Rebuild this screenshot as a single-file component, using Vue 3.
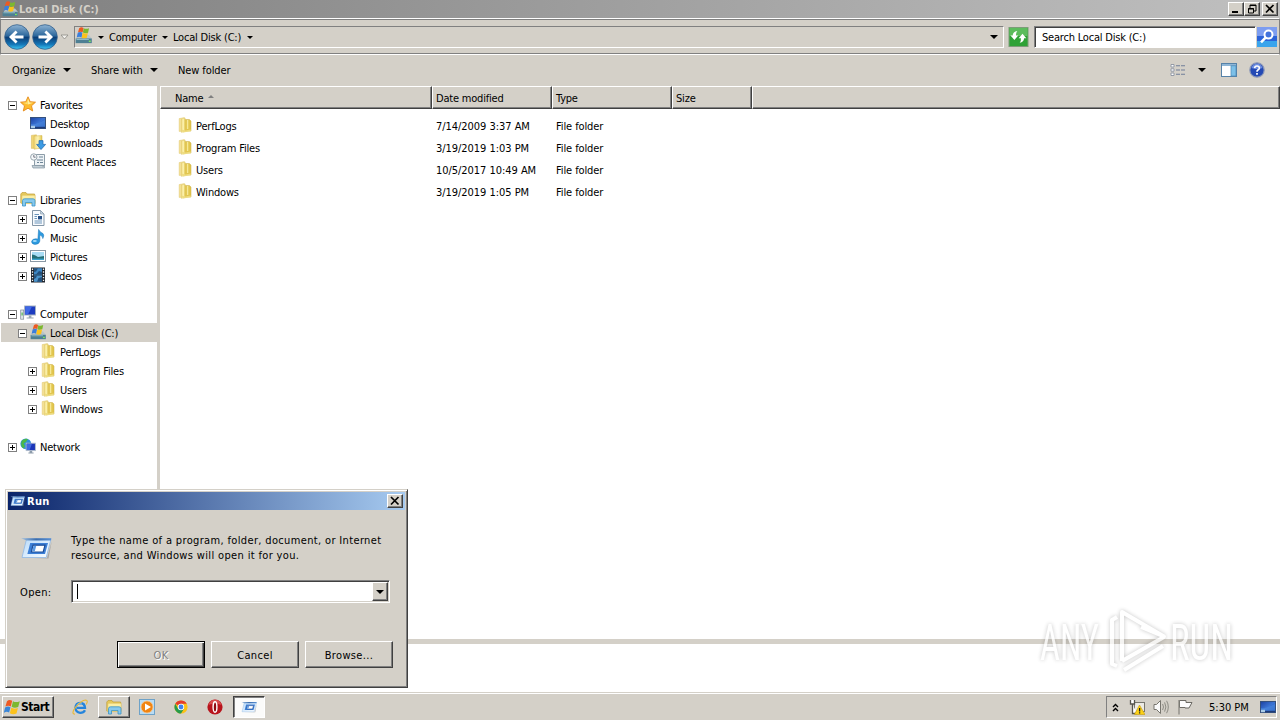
<script setup>
import { ref } from 'vue';

let tree = ref([
    { name: 'Favorites', icon: 'star', level: 0, toggle: 'minus' },
    { name: 'Desktop', icon: 'desktop', level: 1 },
    { name: 'Downloads', icon: 'downloads', level: 1 },
    { name: 'Recent Places', icon: 'recent', level: 1 },
    { name: 'Libraries', icon: 'libraries', level: 0, toggle: 'minus', gap: true },
    { name: 'Documents', icon: 'document', level: 1, toggle: 'plus' },
    { name: 'Music', icon: 'music', level: 1, toggle: 'plus' },
    { name: 'Pictures', icon: 'picture', level: 1, toggle: 'plus' },
    { name: 'Videos', icon: 'video', level: 1, toggle: 'plus' },
    { name: 'Computer', icon: 'computer', level: 0, toggle: 'minus', gap: true },
    { name: 'Local Disk (C:)', icon: 'drive', level: 1, toggle: 'minus', selected: true },
    { name: 'PerfLogs', icon: 'folder', level: 2 },
    { name: 'Program Files', icon: 'folder', level: 2, toggle: 'plus' },
    { name: 'Users', icon: 'folder', level: 2, toggle: 'plus' },
    { name: 'Windows', icon: 'folder', level: 2, toggle: 'plus' },
    { name: 'Network', icon: 'network', level: 0, toggle: 'plus', gap: true },
]);

let files = ref([
    { name: 'PerfLogs', date: '7/14/2009 3:37 AM', type: 'File folder' },
    { name: 'Program Files', date: '3/19/2019 1:03 PM', type: 'File folder' },
    { name: 'Users', date: '10/5/2017 10:49 AM', type: 'File folder' },
    { name: 'Windows', date: '3/19/2019 1:05 PM', type: 'File folder' },
]);

let taskbar = ref([
    { icon: 'ie' },
    { icon: 'libraries', state: 'raised' },
    { icon: 'player' },
    { icon: 'chrome' },
    { icon: 'opera' },
    { icon: 'run', state: 'pressed' },
]);

let runText = ref('');
</script>

<template>
    <div class="screen">
        <svg class="sprites" width="0" height="0">
            <defs>
                <linearGradient id="gFolder" x1="0" y1="0" x2="1" y2="0">
                    <stop offset="0" stop-color="#f0d87c" />
                    <stop offset=".5" stop-color="#fdf4b4" />
                    <stop offset="1" stop-color="#e2c850" />
                </linearGradient>
                <linearGradient id="gNav" x1="0" y1="0" x2="0" y2="1">
                    <stop offset="0" stop-color="#8fb4d4" />
                    <stop offset=".45" stop-color="#2c679c" />
                    <stop offset=".52" stop-color="#0c3f78" />
                    <stop offset=".8" stop-color="#1477b8" />
                    <stop offset="1" stop-color="#3cc8f4" />
                </linearGradient>
                <linearGradient id="gScreen" x1="0" y1="0" x2="1" y2="1">
                    <stop offset="0" stop-color="#1b3fa0" />
                    <stop offset=".5" stop-color="#3b74d4" />
                    <stop offset="1" stop-color="#1848a8" />
                </linearGradient>
                <linearGradient id="gRun" x1="0" y1="0" x2="1" y2="1">
                    <stop offset="0" stop-color="#b8dafa" />
                    <stop offset="1" stop-color="#fafdff" />
                </linearGradient>
                <linearGradient id="gRunBar" x1="0" y1="0" x2="1" y2="0">
                    <stop offset="0" stop-color="#9fc0e2" />
                    <stop offset=".5" stop-color="#3c6eae" />
                    <stop offset="1" stop-color="#5a90d4" />
                </linearGradient>
            </defs>
            <symbol id="flag4" viewBox="0 0 16 16">
                <path d="M3 2.2Q5.2 .2 8.2 1.8L6.8 7.4Q4.2 5.8 1.4 7.6Z" fill="#ee5a24" />
                <path d="M9 2.2Q11.8 4 15.8 2.2L14.2 8Q10.6 9.6 7.6 7.8Z" fill="#7cb82f" />
                <path d="M1.1 8.6Q3.8 6.8 6.5 8.3L5.1 13.6Q2.6 12-.2 13.8Z" fill="#3a86d8" />
                <path d="M7.3 8.8Q10.2 10.4 13.9 8.9L12.5 14.4Q9 16 5.9 14.2Z" fill="#fcc21c" />
            </symbol>
            <symbol id="drive" viewBox="0 0 16 16">
                <path d="M2 10L4 7.5H13L15.6 10.5V14.6H1.4Z" fill="#b8c4c8" />
                <path d="M.6 10.8H15.8V15.2H.6Z" fill="#4e7f93" />
                <path d="M1.4 11.4H13V12.2H1.4Z" fill="#9dc6d2" />
                <rect x="13" y="12.8" width="1.8" height="1.3" fill="#7cec58" />
                <path d="M3.9 1.2Q5.7-.4 8.1 .9L7.2 5Q5.1 3.8 2.8 5.2Z" fill="#ec5a22" />
                <path d="M8.3 1.2Q10.2 2.3 13.2 1.1L12.3 5.3Q9.8 6.3 7.4 5.2Z" fill="#7cb82f" />
                <path d="M2.6 5.4Q4.9 4.1 7 5.3L6.1 9.8Q3.9 8.4 1.6 9.9Z" fill="#3a7edc" />
                <path d="M7.2 5.5Q9.3 6.6 12.1 5.6L11.1 10.1Q8.6 11.2 6.3 10Z" fill="#fcc21c" />
            </symbol>
            <symbol id="folder" viewBox="0 0 16 16">
                <path d="M2.2 1.6L7.4 .6V14L2.2 14.4Z" fill="#f5e298" stroke="#dcc468" stroke-width=".5" />
                <path d="M7.2 2.6H12.4L14 4V14H7.2Z" fill="#e2c64e" stroke="#c9ad44" stroke-width=".5" />
                <path d="M4.4 2L8.2 1.2V14.4L4.4 15.4Z" fill="url(#gFolder)" stroke="#dcc468" stroke-width=".4" />
                <path d="M10.6 3V12" stroke="#f6e898" stroke-width="1.4" />
                <path d="M4.4 12.4L8.4 13.6 13.8 12.6V14.2L6 15.4Z" fill="#eedc80" />
            </symbol>
            <symbol id="star" viewBox="0 0 16 16">
                <path d="M8 .8L10.2 5.7L15.5 6.2L11.5 9.8L12.7 15L8 12.2L3.3 15L4.5 9.8L.5 6.2L5.8 5.7Z" fill="#fdbb2d" stroke="#e58a1c" stroke-width=".9" />
                <path d="M8 2.6L9.5 6.4L13.3 6.8L8 8.6Z" fill="#fff0a0" />
                <path d="M8 2.6L6.5 6.4L2.7 6.8L7.8 8.6Z" fill="#fde070" />
            </symbol>
            <symbol id="desktop" viewBox="0 0 16 16">
                <rect x=".5" y="2.5" width="15" height="11" fill="url(#gScreen)" stroke="#35507c" />
                <path d="M1 9Q6 10 15 5V12H1Z" fill="#4d8be0" opacity=".6" />
                <rect x="1" y="11.8" width="14" height="1.4" fill="#1d3a78" />
                <rect x="1" y="10.8" width="4" height="2.4" fill="#a9cbe8" />
            </symbol>
            <symbol id="downloads" viewBox="0 0 16 16">
                <path d="M1.4 1.4L6.4 .8V14L1.4 14.4Z" fill="#f0d675" stroke="#d0b04a" stroke-width=".5" />
                <path d="M4 2L12 1.6V14L4 15.2Z" fill="url(#gFolder)" stroke="#d0b04a" stroke-width=".5" />
                <path d="M9 6.6H13V10.4H15.6L11 15.6L6.6 10.4H9Z" fill="#3c9be4" stroke="#1c66ac" stroke-width=".7" />
            </symbol>
            <symbol id="recent" viewBox="0 0 16 16">
                <path d="M4.5 1.5H14.5V12.5H4.5Z" fill="#eef3f6" stroke="#8d9da8" />
                <path d="M2 12.5H12Q13 15.5 14.5 12.5V15H3Z" fill="#c3cfd6" stroke="#8394a0" stroke-width=".7" />
                <path d="M9 4H13M7 9.5H9M10 9.5H13M7 7H13" stroke="#6c8496" stroke-width="1.2" />
                <circle cx="3.8" cy="4" r="3.2" fill="#f6f9fa" stroke="#9aa8b0" />
                <path d="M3.8 2V4.2H5.6" fill="none" stroke="#556" stroke-width=".8" />
            </symbol>
            <symbol id="libraries" viewBox="0 0 16 16">
                <path d="M.8 3L2 1.6H6L7 3H14.6V12H.8Z" fill="#e8cb5e" stroke="#bf9c34" stroke-width=".7" />
                <path d="M2 4.2H15.2V12.6H1.4Z" fill="#fbeea4" stroke="#d4b650" stroke-width=".5" />
                <path d="M2.5 15V9.6Q2.5 7.8 4.5 7.8H13Q15 7.8 15 9.6V15H12V11.5H5.5V15Z" fill="#86c9ee" stroke="#3b93c4" stroke-width=".8" />
            </symbol>
            <symbol id="document" viewBox="0 0 16 16">
                <path d="M2.5 .5H10.5L14 4V15.5H2.5Z" fill="#f8fbfe" stroke="#8497a8" />
                <path d="M10.5 .5V4H14Z" fill="#c6d6e4" stroke="#8497a8" stroke-width=".6" />
                <path d="M4.5 4.5H9M4.5 6.5H7M4.5 8.5H7M4.5 11H12M4.5 13H12" stroke="#6b94ba" />
                <rect x="8" y="6" width="4" height="3.4" fill="#264f86" />
            </symbol>
            <symbol id="music" viewBox="0 0 16 16">
                <path d="M8.6 .4Q10 3.4 13 4.6Q14.6 6.6 12.8 9.6Q12.6 6.6 9.8 6V12.2Q9 15.4 5 15.4Q1.4 15 1.6 12.4Q2.4 9.6 6 9.8Q7.6 9.9 7.9 10.2Z" fill="#2d9be0" stroke="#1872b4" stroke-width=".5" />
                <ellipse cx="4.8" cy="12" rx="2" ry="1.1" fill="#a4dcfa" />
            </symbol>
            <symbol id="picture" viewBox="0 0 16 16">
                <rect x=".5" y="2.5" width="15" height="11" fill="#fff" stroke="#8a98a4" />
                <rect x="2" y="4" width="12" height="8" fill="#a8dcf4" />
                <path d="M2 6.5Q5 6.5 8 9L14 8V12H2Z" fill="#256f76" />
                <path d="M2 10.6H14V12H2Z" fill="#3ba4cf" />
            </symbol>
            <symbol id="video" viewBox="0 0 16 16">
                <rect x="1" y=".5" width="14" height="15" fill="#20262e" />
                <rect x="4" y="1.2" width="8" height="6.4" fill="#3d87c4" />
                <rect x="4" y="8.4" width="8" height="6.4" fill="#4a94cc" />
                <path d="M4 1.2H8L6 4.5L4 5ZM6 7.6L9 4L12 5V7.6ZM4 8.4H7L6 11L4 12ZM7 14.8L8.5 11L12 10V14.8Z" fill="#23507c" />
                <path d="M2.5 1.5V15M13.5 1.5V15" stroke="#eef2f4" stroke-width="1.3" stroke-dasharray="1.4 1.4" />
            </symbol>
            <symbol id="computer" viewBox="0 0 16 16">
                <rect x=".7" y="5" width="3" height="9.2" fill="#dfe4e8" stroke="#7e8c96" stroke-width=".7" />
                <rect x="1.5" y="7.5" width="1.2" height="3" fill="#4cba4a" />
                <rect x="4.6" y="1" width="11" height="9" fill="#1c3cc0" stroke="#a8b4c0" />
                <path d="M5.2 1.6H12L8 9.4H5.2Z" fill="#3f68e6" />
                <path d="M8.8 10.5H11.4V12.4H13.6V13.6H6.6V12.4H8.8Z" fill="#98a6b2" />
            </symbol>
            <symbol id="network" viewBox="0 0 16 16">
                <circle cx="5.8" cy="5.8" r="5.4" fill="#2f8fdc" />
                <path d="M2 2.4Q5 0 8 1L6 4L3.6 5.4L5 8L3.6 10.6Q-.4 8 2 2.4Z" fill="#4bb848" />
                <rect x="6.2" y="5.2" width="9.2" height="7.4" fill="#1b36b8" stroke="#b4c0cc" stroke-width=".9" />
                <path d="M6.8 5.8H12L9.6 12H6.8Z" fill="#4068e0" />
                <path d="M9.6 12.9H12.2V14.4H13.6V15.4H8.4V14.4H9.6Z" fill="#8d9caa" />
            </symbol>
            <symbol id="run" viewBox="0 0 32 24">
                <path d="M6.5 21.8L28.5 22.6L31.8 5L27 22Z" fill="#8a8c90" opacity=".6" />
                <path d="M6.5 3H31L26.2 21.5H2Z" fill="url(#gRun)" stroke="#8fb8e4" stroke-width=".8" />
                <path d="M1 2.2H31.4L30.8 4.4H6.6Z" fill="url(#gRunBar)" />
                <path d="M10.2 7H28L25 18H7.4Z" fill="#3c7fd6" />
                <path d="M13 9.2H25L23.2 16H11.4Z" fill="#fff" stroke="#1b4c98" stroke-width="1.2" />
                <path d="M13.4 10H16.2L14.8 15.2H12.2Z" fill="#5a9ae4" />
            </symbol>
            <symbol id="ie" viewBox="0 0 16 16">
                <path d="M13 11.2Q11.6 13.8 8.2 13.8Q3.6 13.4 3.4 8.8Q3.8 4.2 8.2 4Q12.8 4.2 13 8.8H5" fill="none" stroke="#2484dc" stroke-width="2.3" />
                <path d="M4.6 6Q6.4 3.6 10 4" fill="none" stroke="#7cc6f6" />
                <path d="M3 15.2Q-1.4 14.8 3.6 8.2Q9.4 1.4 13.6 1Q16.6 1.2 14.2 5.6" fill="none" stroke="#e8b93a" stroke-width="1.1" />
            </symbol>
            <symbol id="player" viewBox="0 0 16 16">
                <rect x=".5" y=".5" width="15" height="15" fill="#b9dcf4" stroke="#6ea2c8" />
                <circle cx="8" cy="8" r="6" fill="#f08412" stroke="#fac488" stroke-width=".8" />
                <path d="M6 4.4L12 8L6 11.6Z" fill="#fff" />
            </symbol>
            <symbol id="chrome" viewBox="0 0 16 16">
                <circle cx="8" cy="8" r="6.6" fill="#fbc116" />
                <path d="M8 8L2.3 4.7A6.6 6.6 0 0 1 13.7 4.7H8Z" fill="#e33b2e" />
                <path d="M2.3 4.7A6.6 6.6 0 0 0 8 14.6L11 9.7L8 8L5 9.7Z" fill="#269a4c" />
                <circle cx="8" cy="8" r="3.2" fill="#fff" />
                <circle cx="8" cy="8" r="2.4" fill="#3f82ee" />
            </symbol>
            <symbol id="opera" viewBox="0 0 16 16">
                <circle cx="8" cy="8" r="7.6" fill="#b8141c" />
                <path d="M1.4 6Q3 .8 8 .8T14.6 6Q8 3 1.4 6Z" fill="#d84a4c" />
                <ellipse cx="8" cy="8" rx="1.9" ry="5.2" fill="#8e0a10" stroke="#fff" stroke-width="1.4" />
            </symbol>
        </svg>

        <div class="explorer">
            <div class="title-bar">
                <svg class="icon"><use href="#drive" /></svg>
                <span class="title">Local Disk (C:)</span>
                <div class="window-buttons">
                    <button class="win-btn"><svg viewBox="0 0 10 10"><path d="M1 8H7" stroke="#000" stroke-width="2" /></svg></button>
                    <button class="win-btn"><svg viewBox="0 0 10 10"><path d="M3 1H9V7H7M3 1V4M3 1.5H9M1.5 4.5H6.5V9H1.5ZM1 5H7" fill="none" stroke="#000" /></svg></button>
                    <button class="win-btn close"><svg viewBox="0 0 10 10"><path d="M1 1L8.5 8.5M8.5 1L1 8.5" stroke="#000" stroke-width="1.7" /></svg></button>
                </div>
            </div>

            <div class="nav-bar">
                <svg class="nav-circle" viewBox="0 0 26 26">
                    <circle cx="13" cy="13" r="12.3" fill="url(#gNav)" stroke="#34608c" stroke-width=".8" />
                    <path d="M19.5 13H8M12.6 7.6L7 13L12.6 18.4" fill="none" stroke="#fff" stroke-width="2.8" />
                </svg>
                <svg class="nav-circle" viewBox="0 0 26 26">
                    <circle cx="13" cy="13" r="12.3" fill="url(#gNav)" stroke="#34608c" stroke-width=".8" />
                    <path d="M6.5 13H18M13.4 7.6L19 13L13.4 18.4" fill="none" stroke="#fff" stroke-width="2.8" />
                </svg>
                <svg class="nav-history" viewBox="0 0 9 6"><path d="M1 1H8L4.5 5Z" fill="#f4f2ee" stroke="#8c8a84" stroke-width=".8" /></svg>
                <div class="address">
                    <svg class="address-icon"><use href="#drive" /></svg>
                    <i class="caret small"></i>
                    <span class="crumb computer">Computer</span>
                    <i class="caret small"></i>
                    <span class="crumb disk">Local Disk (C:)</span>
                    <i class="caret small"></i>
                    <i class="caret dropdown"></i>
                </div>
                <svg class="refresh" viewBox="0 0 20 20">
                    <rect x=".5" y=".5" width="19" height="19" fill="#2fa236" stroke="#7c9c78" />
                    <rect x="1" y="1" width="18" height="8" fill="#5cbc5c" />
                    <path d="M2 8.4H4.2Q4.4 4.8 8.8 4Q7.2 6 7.6 8.4H9.8L5.9 13Z" fill="#fff" />
                    <path d="M10.2 11.2L14 6.8L17.8 11.2H15.6Q15.4 14.8 11.2 15.8Q12.8 13.6 12.4 11.2Z" fill="#fff" />
                </svg>
                <div class="search">Search Local Disk (C:)</div>
                <svg class="search-btn" viewBox="0 0 20 20">
                    <rect width="20" height="20" fill="#2b62d8" />
                    <rect width="20" height="9" fill="#7d9df0" />
                    <path d="M0 14H20V20H0Z" fill="#3aa4ec" />
                    <circle cx="11.5" cy="7.6" r="4" fill="#4272dc" stroke="#fff" stroke-width="2" />
                    <path d="M8.6 10.6L4 15.4" stroke="#fff" stroke-width="2.6" />
                </svg>
            </div>

            <div class="toolbar">
                <div class="tool organize">Organize <i class="caret"></i></div>
                <div class="tool share">Share with <i class="caret"></i></div>
                <div class="tool">New folder</div>
                <div class="tool-right">
                    <svg class="view-icon" viewBox="0 0 16 14">
                        <path d="M1 1.5H4V4H1ZM1 5.8H4V8.2H1ZM1 10H4V12.5H1Z" fill="#fff" stroke="#8a92a0" stroke-width=".9" />
                        <path d="M6 2.7H10M11 2.7H15M6 7H10M11 7H15M6 11.2H10M11 11.2H15" stroke="#6f7d98" stroke-width="1.1" />
                    </svg>
                    <i class="caret"></i>
                    <svg class="pane-icon" viewBox="0 0 16 14">
                        <rect x=".5" y=".5" width="15" height="13" fill="#fff" stroke="#5682a8" />
                        <path d="M1 2H15" stroke="#74a4cc" stroke-width="1.6" />
                        <rect x="10" y="2.8" width="5" height="10.2" fill="#7cc0e8" stroke="#4a86b4" stroke-width=".7" />
                    </svg>
                    <svg class="help-icon" viewBox="0 0 16 16">
                        <circle cx="8" cy="8" r="7.2" fill="#2449b4" stroke="#8c98b8" stroke-width="1.2" />
                        <path d="M2.4 6Q4 1.8 8 1.8T13.6 6Q8 8 2.4 6Z" fill="#6c8ce0" />
                        <path d="M5.6 6.2Q5.8 4 8 4T10.4 6Q10.4 7.2 8.9 8Q8 8.6 8 9.8M8 11V12.8" fill="none" stroke="#fff" stroke-width="1.7" />
                    </svg>
                </div>
            </div>

            <div class="main">
                <div class="sidebar">
                    <div
                        class="tree-row"
                        v-for="item in tree"
                        :key="item.name + item.level"
                        :class="['level-' + item.level, { gap: item.gap, selected: item.selected }]"
                    >
                        <span class="toggle" :class="item.toggle"></span>
                        <svg class="icon"><use :href="'#' + item.icon" /></svg>
                        <span class="label">{{ item.name }}</span>
                    </div>
                </div>
                <div class="file-list">
                    <div class="columns header">
                        <div class="cell name">Name <i class="sort"></i></div>
                        <div class="cell">Date modified</div>
                        <div class="cell">Type</div>
                        <div class="cell">Size</div>
                        <div class="cell"></div>
                    </div>
                    <div class="rows">
                        <div class="columns row" v-for="file in files" :key="file.name">
                            <div class="file-name">
                                <svg class="icon"><use href="#folder" /></svg>
                                <span>{{ file.name }}</span>
                            </div>
                            <div class="file-cell date">{{ file.date }}</div>
                            <div class="file-cell">{{ file.type }}</div>
                        </div>
                    </div>
                </div>
            </div>
            <div class="details"></div>
        </div>

        <div class="taskbar">
            <button class="start">
                <svg class="start-flag"><use href="#flag4" /></svg>
                <span>Start</span>
            </button>
            <div class="tasks">
                <div class="task" v-for="task in taskbar" :key="task.icon">
                    <div class="task-btn" :class="task.state">
                        <svg class="icon"><use :href="'#' + task.icon" /></svg>
                    </div>
                </div>
            </div>
            <div class="tray">
                <svg class="chevrons" viewBox="0 0 7 9"><path d="M1 4L3.5 1.5L6 4M1 8L3.5 5.5L6 8" fill="none" stroke="#000" stroke-width="1.4" /></svg>
                <svg class="icon" viewBox="0 0 16 16">
                    <rect x="5.5" y="3.5" width="10" height="9" fill="#eceae4" stroke="#77756e" />
                    <path d="M1.5 1V5H5.5V1M3.5 5V14.5H8" fill="#fff" stroke="#55534e" stroke-width="1.3" />
                    <path d="M10.5 6L16 15.5H5.4Z" fill="#fcd116" stroke="#c49a10" stroke-width=".6" />
                    <path d="M10.6 9V12.4M10.6 13.3V14.6" stroke="#222" stroke-width="1.3" />
                </svg>
                <svg class="icon" viewBox="0 0 16 16">
                    <path d="M1 5.5H3.5L7.5 1.5V14.5L3.5 10.5H1Z" fill="#fafafa" stroke="#77756e" />
                    <path d="M9.6 5Q11.4 8 9.6 11M11.6 3.4Q14.2 8 11.6 12.6M13.6 1.8Q17 8 13.6 14.2" fill="none" stroke="#85837c" stroke-width=".9" />
                </svg>
                <svg class="icon" viewBox="0 0 16 16">
                    <path d="M2.5 8.5V1.5H9V3.5H15L12 9H8V8.5Z" fill="#fcfcfc" stroke="#6c6a64" />
                    <path d="M2 1V15.4" stroke="#84827c" stroke-width="1.2" />
                </svg>
                <span class="clock">5:30 PM</span>
                <svg class="icon"><use href="#desktop" /></svg>
            </div>
        </div>

        <div class="run-dialog">
            <div class="run-title">
                <svg class="run-small"><use href="#run" /></svg>
                <span>Run</span>
                <button class="win-btn close"><svg viewBox="0 0 10 10"><path d="M1 1L8.5 8.5M8.5 1L1 8.5" stroke="#000" stroke-width="1.7" /></svg></button>
            </div>
            <div class="run-info">
                <svg class="run-big"><use href="#run" /></svg>
                <p>Type the name of a program, folder, document, or Internet<br />resource, and Windows will open it for you.</p>
            </div>
            <div class="run-open">
                <label>Open:</label>
                <div class="combo">
                    <span class="combo-text">{{ runText }}<i class="cursor"></i></span>
                    <button class="combo-btn"><i class="caret"></i></button>
                </div>
            </div>
            <div class="run-actions">
                <button class="btn default" disabled>OK</button>
                <button class="btn">Cancel</button>
                <button class="btn">Browse...</button>
            </div>
        </div>

        <svg class="watermark" viewBox="0 0 250 90">
            <g class="mark">
                <text x="19" y="60" textLength="59" lengthAdjust="spacingAndGlyphs">ANY</text>
                <text x="149" y="60" textLength="63" lengthAdjust="spacingAndGlyphs">RUN</text>
                <path d="M101 61V12L143 36.5L120 27" />
                <path d="M101 61L143 37" />
                <path d="M96 17L91 20V64L96 66M103 70L142 46" />
            </g>
        </svg>
    </div>
</template>

<style>
body {
    margin: 0;
    overflow: hidden;
}
</style>

<style scoped>
.screen {
    position: relative;
    width: 1280px;
    height: 720px;
    display: flex;
    flex-direction: column;
    background-color: #fff;
    color: #000;
    font-family: 'DejaVu Sans Condensed', 'DejaVu Sans', sans-serif;
    font-stretch: condensed;
    font-size: 11px;
    letter-spacing: -0.2px;
    white-space: nowrap;
    overflow: hidden;
}

.sprites {
    position: absolute;
}

button {
    font: inherit;
    letter-spacing: inherit;
    color: inherit;
    padding: 0;
    box-sizing: border-box;
    background-color: #d4d0c8;
    border: 1px solid;
    border-color: #fff #404040 #404040 #fff;
    box-shadow: inset -1px -1px 0 #808080;
}

.icon {
    width: 16px;
    height: 16px;
    flex: none;
}

.caret {
    flex: none;
    width: 0;
    height: 0;
    border-left: 4px solid transparent;
    border-right: 4px solid transparent;
    border-top: 4px solid #000;
}

.caret.small {
    border-left-width: 3px;
    border-right-width: 3px;
    border-top-width: 3px;
}

.explorer {
    height: 692px;
    display: flex;
    flex-direction: column;
}

.title-bar {
    height: 18px;
    display: flex;
    align-items: center;
    background: linear-gradient(to right, #808080, #c0c0c0);
    padding: 0 2px 0 2px;
}

.title {
    margin-left: 1px;
    flex: 1;
    font-weight: bold;
    letter-spacing: -0.03px;
    color: #d4d0c8;
}

.window-buttons {
    display: flex;
}

.win-btn {
    width: 16px;
    height: 14px;
    display: flex;
    align-items: center;
    justify-content: center;
}

.win-btn.close {
    margin-left: 2px;
}

.win-btn svg {
    width: 10px;
    height: 10px;
}

.nav-bar {
    box-sizing: border-box;
    height: 37px;
    display: flex;
    align-items: center;
    background-color: #d4d0c8;
    border: 1px solid #808080;
    border-top: 1px solid #fff;
    border-bottom: 1px solid #fff;
    box-shadow: inset 0 1px 0 #808080, inset 0 -1px 0 #808080;
    padding: 1px 1px 0 3px;
}

.nav-circle {
    width: 26px;
    height: 26px;
    margin-right: 2px;
    flex: none;
}

.nav-history {
    width: 9px;
    height: 6px;
    margin-right: 5px;
}

.address {
    box-sizing: border-box;
    width: 930px;
    height: 22px;
    display: flex;
    align-items: center;
    border: 1px solid;
    border-color: #808080 #fff #fff #808080;
}

.address-icon {
    width: 17px;
    height: 17px;
    margin-right: 6px;
    margin-bottom: 3px;
}

.crumb {
    margin-left: 5px;
}

.crumb.computer {
    width: 53px;
}

.crumb.disk {
    width: 74px;
}

.dropdown {
    margin-left: auto;
    margin-right: 5px;
}

.refresh {
    width: 21px;
    height: 20px;
    margin-left: 4px;
}

.search {
    box-sizing: border-box;
    width: 222px;
    height: 22px;
    line-height: 21px;
    margin-left: 5px;
    padding-left: 7px;
    background-color: #fff;
    border: 1px solid;
    border-color: #808080 #fff #fff #808080;
    box-shadow: inset 1px 1px 0 #404040;
}

.search-btn {
    width: 20px;
    height: 20px;
    margin-left: 1px;
}

.toolbar {
    box-sizing: border-box;
    height: 31px;
    display: flex;
    align-items: center;
    background-color: #d4d0c8;
    padding: 0 0 1px 12px;
    letter-spacing: -0.1px;
}

.tool {
    box-sizing: border-box;
    display: flex;
    align-items: center;
    justify-content: space-between;
}

.tool.organize {
    width: 79px;
    padding-right: 20px;
}

.tool.share {
    width: 87px;
    padding-right: 20px;
}

.tool-right {
    margin-left: auto;
    display: flex;
    align-items: center;
    padding-right: 15px;
}

.view-icon {
    width: 16px;
    height: 14px;
    margin-right: 12px;
}

.pane-icon {
    width: 16px;
    height: 14px;
    margin-left: 15px;
    margin-right: 12px;
}

.help-icon {
    width: 16px;
    height: 16px;
}

.main {
    height: 553px;
    display: flex;
}

.sidebar {
    box-sizing: border-box;
    width: 160px;
    padding-top: 9px;
    border-right: 3px solid #d4d0c8;
}

.tree-row {
    height: 19px;
    display: flex;
    align-items: center;
    padding-left: 8px;
}

.tree-row.level-1 {
    padding-left: 18px;
}

.tree-row.level-2 {
    padding-left: 28px;
}

.tree-row.gap {
    margin-top: 19px;
}

.tree-row.selected {
    background-color: #d4d0c8;
    margin-left: 1px;
    padding-left: 17px;
}

.tree-row .icon {
    margin-left: 3px;
    margin-right: 4px;
    margin-bottom: 2px;
}

.tree-row .label {
    padding-top: 2px;
}

.toggle {
    box-sizing: border-box;
    width: 9px;
    height: 9px;
    margin-top: 1px;
    flex: none;
}

.toggle.plus,
.toggle.minus {
    border: 1px solid #808080;
    background: linear-gradient(#000, #000) center / 5px 1px no-repeat, #fff;
}

.toggle.plus {
    background: linear-gradient(#000, #000) center / 5px 1px no-repeat, linear-gradient(#000, #000) center / 1px 5px no-repeat, #fff;
}

.file-list {
    flex: 1;
}

.columns {
    display: grid;
    grid-template-columns: 272px 120px 120px 80px 1fr;
}

.header {
    height: 23px;
    background-color: #d4d0c8;
}

.cell {
    box-sizing: border-box;
    display: flex;
    align-items: center;
    padding-left: 3px;
    padding-top: 2px;
    border: 1px solid;
    border-color: #fff #404040 #404040 #fff;
    box-shadow: inset -1px -1px 0 #808080;
}

.cell.name {
    padding-left: 14px;
}

.sort {
    margin-left: 5px;
    margin-bottom: 4px;
    border-left: 3px solid transparent;
    border-right: 3px solid transparent;
    border-bottom: 3px solid #808080;
}

.rows {
    padding-top: 6px;
}

.row {
    height: 22px;
    align-items: center;
}

.file-name {
    display: flex;
    align-items: center;
    padding-left: 17px;
}

.file-name .icon {
    margin-right: 3px;
    margin-bottom: 2px;
}

.file-cell {
    padding-left: 4px;
    letter-spacing: -0.1px;
}

.file-cell.date {
    letter-spacing: -0.04px;
}

.details {
    flex: 1;
    border-top: 5px solid #d4d0c8;
    background-color: #fff;
}

.taskbar {
    box-sizing: border-box;
    height: 28px;
    display: flex;
    align-items: center;
    background-color: #d4d0c8;
    border-top: 1px solid #d4d0c8;
    box-shadow: inset 0 1px 0 #fff;
    padding: 1px 3px 0 2px;
}

.start {
    width: 52px;
    height: 22px;
    display: flex;
    align-items: center;
    font-weight: bold;
    font-size: 12px;
    letter-spacing: -0.5px;
    padding-left: 1px;
}

.start-flag {
    width: 16px;
    height: 16px;
    margin-right: 1px;
}

.tasks {
    flex: 1;
    display: flex;
    padding-left: 9px;
}

.task {
    width: 33.8px;
    display: flex;
    justify-content: center;
}

.task-btn {
    box-sizing: border-box;
    width: 32px;
    height: 22px;
    display: flex;
    align-items: center;
    justify-content: center;
}

.task-btn.raised {
    border: 1px solid;
    border-color: #fff #404040 #404040 #fff;
    box-shadow: inset -1px -1px 0 #808080;
}

.task-btn.pressed {
    background-color: #fbfbfa;
    border: 1px solid;
    border-color: #404040 #fff #fff #404040;
    box-shadow: inset 1px 1px 0 #808080;
}

.tray {
    box-sizing: border-box;
    width: 171px;
    height: 22px;
    display: flex;
    align-items: center;
    border: 1px solid;
    border-color: #808080 #fff #fff #808080;
    padding-left: 5px;
}

.chevrons {
    width: 7px;
    height: 9px;
    margin-right: 2px;
}

.tray .icon {
    margin-left: 8px;
}

.clock {
    width: 43px;
    margin-left: 16px;
    letter-spacing: 0;
}

/* Run dialog floats over the explorer window */
.run-dialog {
    box-sizing: border-box;
    position: absolute;
    left: 5px;
    top: 489px;
    width: 403px;
    height: 199px;
    padding: 2px;
    background-color: #d4d0c8;
    border: 1px solid;
    border-color: #d4d0c8 #404040 #404040 #d4d0c8;
    box-shadow: inset 1px 1px 0 #fff, inset -1px -1px 0 #808080;
    letter-spacing: 0.35px;
}

.run-title {
    height: 18px;
    display: flex;
    align-items: center;
    background: linear-gradient(to right, #0a246a, #a6caf0);
    color: #fff;
    font-weight: bold;
    letter-spacing: 0.3px;
    padding: 0 2px;
}

.run-title span {
    flex: 1;
}

.run-small {
    width: 15px;
    height: 12px;
    margin-right: 2px;
}

.run-info {
    display: flex;
    align-items: flex-start;
    padding: 23px 0 0 12px;
}

.run-big {
    width: 32px;
    height: 24px;
    margin-top: 3px;
    margin-right: 19px;
}

.run-info p {
    margin: 0;
    line-height: 15px;
}

.run-open {
    display: flex;
    align-items: center;
    margin-top: 17px;
    padding-left: 12px;
}

.run-open label {
    width: 51px;
    padding-top: 1px;
}

.combo {
    box-sizing: border-box;
    width: 319px;
    height: 23px;
    display: flex;
    background-color: #fff;
    border: 1px solid;
    border-color: #808080 #fff #fff #808080;
    box-shadow: inset 1px 1px 0 #404040, inset -1px -1px 0 #d4d0c8;
    padding: 1px;
}

.combo-text {
    flex: 1;
    display: flex;
    align-items: center;
    padding-left: 4px;
}

.cursor {
    width: 1px;
    height: 15px;
    background-color: #000;
}

.combo-btn {
    width: 16px;
    height: 19px;
    display: flex;
    align-items: center;
    justify-content: center;
}

.run-actions {
    display: flex;
    gap: 6px;
    margin-top: 38px;
    padding-left: 109px;
}

.btn {
    width: 88px;
    height: 27px;
    padding-top: 1px;
}

.btn.default {
    border-color: #000;
    color: #808080;
    text-shadow: 1px 1px 0 #fff;
    box-shadow: inset 1px 1px 0 #fff, inset -1px -1px 0 #404040, inset -2px -2px 0 #808080;
}

.watermark {
    position: absolute;
    left: 1021px;
    top: 600px;
    width: 250px;
    height: 90px;
    filter: drop-shadow(0 0 2px rgba(0, 0, 0, 0.3));
    opacity: 0.75;
}

.mark text {
    font-family: Roboto, sans-serif;
    font-size: 50px;
    font-weight: 400;
    letter-spacing: 0;
    fill: #fff;
}

.mark path {
    fill: none;
    stroke: #fff;
    stroke-width: 4px;
    stroke-linejoin: round;
}
</style>
